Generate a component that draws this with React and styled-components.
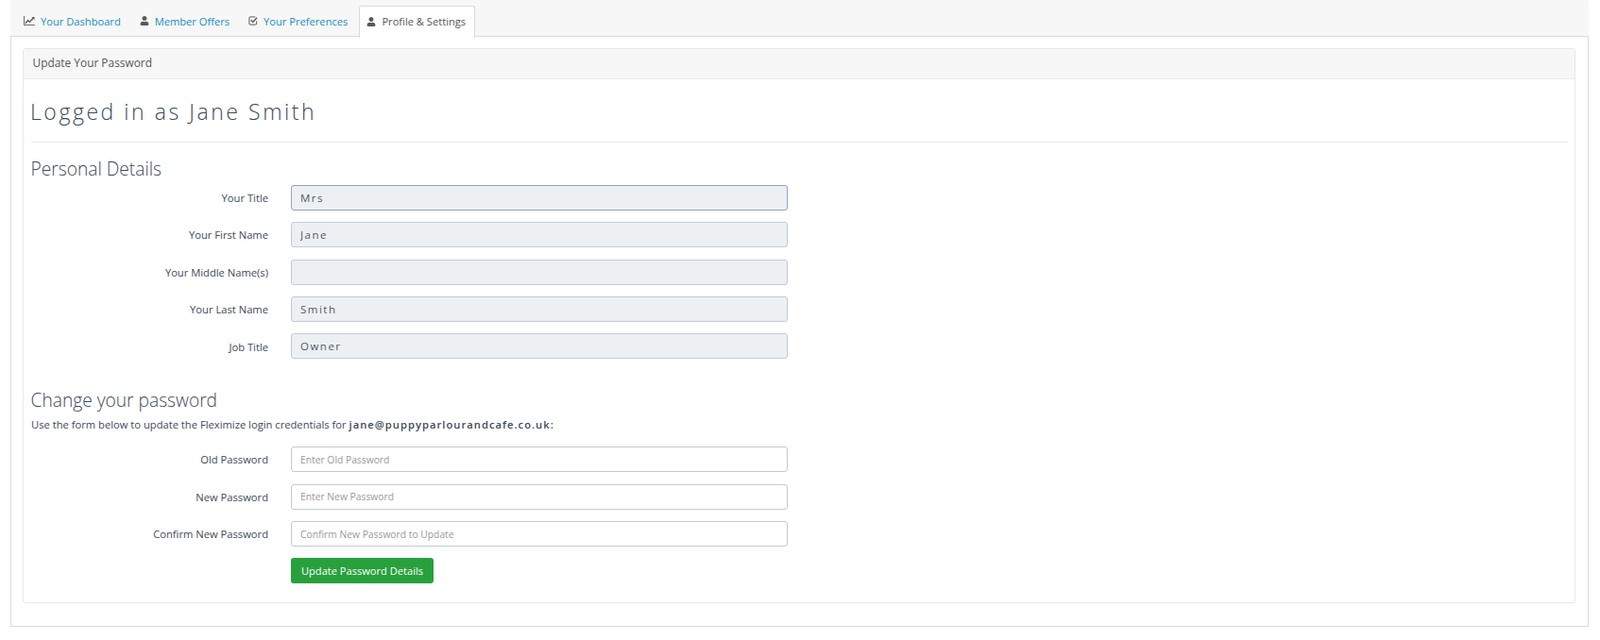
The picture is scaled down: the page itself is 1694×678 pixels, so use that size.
import React from "react";
import styled, { createGlobalStyle } from "styled-components";
import { FaUser } from "react-icons/fa";

const Global = createGlobalStyle`
  html, body { margin: 0; padding: 0; background: #fff; }
  body { font-family: "Open Sans", sans-serif; font-size: 11.2px; color: #3e4b5b; }
`;

const Page = styled.div`
  width: 1694px;
  height: 678px;
  padding: 0 12px 0 11px;
  box-sizing: border-box;
`;

const TabBar = styled.nav`
  display: flex;
  height: 39px;
  box-sizing: border-box;
  padding: 6px 0 0 4px;
  background: #f7f7f7;
  border-bottom: 1px solid #dcdcdc;
  border-top-right-radius: 4px;
  border-top-left-radius: 4px;
`;

const Tab = styled.a`
  display: flex;
  align-items: center;
  gap: 6px;
  box-sizing: border-box;
  padding: 0 9px 2px ${(p) => (p.$active ? "7px" : "9px")};
  margin-left: ${(p) => (p.$active ? "2px" : "0")};
  font-size: 11.15px;
  color: ${(p) => (p.$active ? "#55595c" : "#1a8fc4")};
  background: ${(p) => (p.$active ? "#fff" : "transparent")};
  border: 1px solid ${(p) => (p.$active ? "#dcdcdc" : "transparent")};
  border-bottom: none;
  border-radius: 3px 3px 0 0;
  margin-bottom: ${(p) => (p.$active ? "-1px" : "0")};
  height: ${(p) => (p.$active ? "34px" : "33px")};
  svg { color: #5a5a5a; flex: none; }
`;

const TabPanel = styled.main`
  height: 625px;
  box-sizing: border-box;
  padding: 12px 13px 24px 12px;
  border: 1px solid #dcdcdc;
  border-top: none;
`;

const Card = styled.section`
  height: 100%;
  box-sizing: border-box;
  border: 1px solid #e8e8e8;
  border-radius: 3px;
`;

const CardHeader = styled.header`
  height: 32px;
  box-sizing: border-box;
  padding: 0 9px 3px 9.5px;
  display: flex;
  align-items: center;
  font-size: 11.9px;
  color: #55595c;
  background: #f7f7f7;
  border-bottom: 1px solid #ececec;
`;

const CardBody = styled.div`
  padding: 0 7px 0 8px;
`;

const Title = styled.h1`
  margin: 0;
  padding-top: 19px;
  height: 67px;
  box-sizing: border-box;
  font-size: 23px;
  line-height: 30px;
  font-weight: 300;
  letter-spacing: 2.55px;
  text-indent: -1px;
  color: #3e4b5b;
  border-bottom: 1px solid #e9e9e9;
`;

const SectionHeading = styled.h2`
  margin: ${(p) => p.$top}px 0 0;
  font-size: 19.2px;
  line-height: 26px;
  font-weight: 300;
  text-indent: -0.5px;
  color: #3e4b5b;
`;

const Hint = styled.p`
  margin: 5px 0 0;
  font-size: 11.2px;
  line-height: 15px;
  color: #3e4b5b;
  strong { font-weight: 600; letter-spacing: 1.02px; }
`;

const Fields = styled.div`
  display: flex;
  flex-direction: column;
  gap: ${(p) => p.$gap}px;
  margin-top: ${(p) => p.$top}px;
`;

const Row = styled.div`
  display: flex;
  align-items: center;
  height: 27px;
`;

const Label = styled.label`
  width: 275px;
  flex: none;
  padding-right: 24px;
  box-sizing: border-box;
  text-align: right;
  font-size: 11.2px;
  color: #3e4b5b;
  position: relative;
  top: ${(p) => (p.$nudge ? "1px" : "0")};
`;

const Input = styled.input`
  width: 526px;
  height: 27px;
  box-sizing: border-box;
  padding: 0 9px;
  font-family: "Open Sans", sans-serif;
  font-size: ${(p) => (p.readOnly ? "11.5px" : "10.3px")};
  letter-spacing: ${(p) => (p.readOnly ? "1.5px" : "0")};
  color: #50596a;
  background: ${(p) => (p.readOnly ? "#edf0f3" : "#fff")};
  border: 1px solid ${(p) => (p.$focus ? "#8fa3c2" : "#c3cad8")};
  border-radius: 3px;
  outline: none;
  &::placeholder { color: #9a9a9a; opacity: 1; }
`;

const Actions = styled.div`
  margin: 12px 0 0 275px;
`;

const Button = styled.button`
  height: 27px;
  width: 151px;
  padding: 0;
  font-family: "Open Sans", sans-serif;
  font-size: 11.1px;
  font-weight: 500;
  color: #fff;
  background: #28a03c;
  border: none;
  border-radius: 3px;
`;

const ChartIcon = () => (
  <svg width="12" height="10" viewBox="0 0 13 11" fill="none" stroke="currentColor">
    <path d="M.5 0v10.5H13" strokeWidth="1" />
    <path d="M2 8.5l3-3.5 2 2L11 2.5" strokeWidth="1.5" />
    <path d="M9.2 1H12.6V4.4z" fill="currentColor" stroke="none" />
  </svg>
);

const CheckIcon = () => (
  <svg width="10" height="10" viewBox="0 0 11 11" fill="none" stroke="currentColor">
    <path d="M8 1H2.2A1.2 1.2 0 0 0 1 2.2v6.6A1.2 1.2 0 0 0 2.2 10h6.1a1.2 1.2 0 0 0 1.2-1.2V6" strokeWidth="1.1" />
    <path d="M3 4.6l2.3 2.3L10 2" strokeWidth="1.6" />
  </svg>
);

const personal = [
  { label: "Your Title", value: "Mrs", focus: true },
  { label: "Your First Name", value: "Jane" },
  { label: "Your Middle Name(s)", value: "" },
  { label: "Your Last Name", value: "Smith" },
  { label: "Job Title", value: "Owner", nudge: true },
];

const passwords = [
  { label: "Old Password", placeholder: "Enter Old Password" },
  { label: "New Password", placeholder: "Enter New Password" },
  { label: "Confirm New Password", placeholder: "Confirm New Password to Update" },
];

export default function App() {
  return (
    <Page>
      <Global />
      <TabBar>
        <Tab><ChartIcon />Your Dashboard</Tab>
        <Tab><FaUser size={10} />Member Offers</Tab>
        <Tab><CheckIcon />Your Preferences</Tab>
        <Tab $active><FaUser size={10} />Profile &amp; Settings</Tab>
      </TabBar>
      <TabPanel>
        <Card>
          <CardHeader>Update Your Password</CardHeader>
          <CardBody>
            <Title>Logged in as Jane Smith</Title>
            <SectionHeading $top={15}>Personal Details</SectionHeading>
            <Fields $gap={12.25} $top={4}>
              {personal.map((f) => (
                <Row key={f.label}>
                  <Label $nudge={f.nudge}>{f.label}</Label>
                  <Input readOnly value={f.value} $focus={f.focus} />
                </Row>
              ))}
            </Fields>
            <SectionHeading $top={31}>Change your password</SectionHeading>
            <Hint>
              Use the form below to update the Fleximize login credentials for{" "}
              <strong>jane@puppyparlourandcafe.co.uk:</strong>
            </Hint>
            <Fields $gap={12.5} $top={16}>
              {passwords.map((f) => (
                <Row key={f.label}>
                  <Label>{f.label}</Label>
                  <Input placeholder={f.placeholder} />
                </Row>
              ))}
            </Fields>
            <Actions><Button>Update Password Details</Button></Actions>
          </CardBody>
        </Card>
      </TabPanel>
    </Page>
  );
}
